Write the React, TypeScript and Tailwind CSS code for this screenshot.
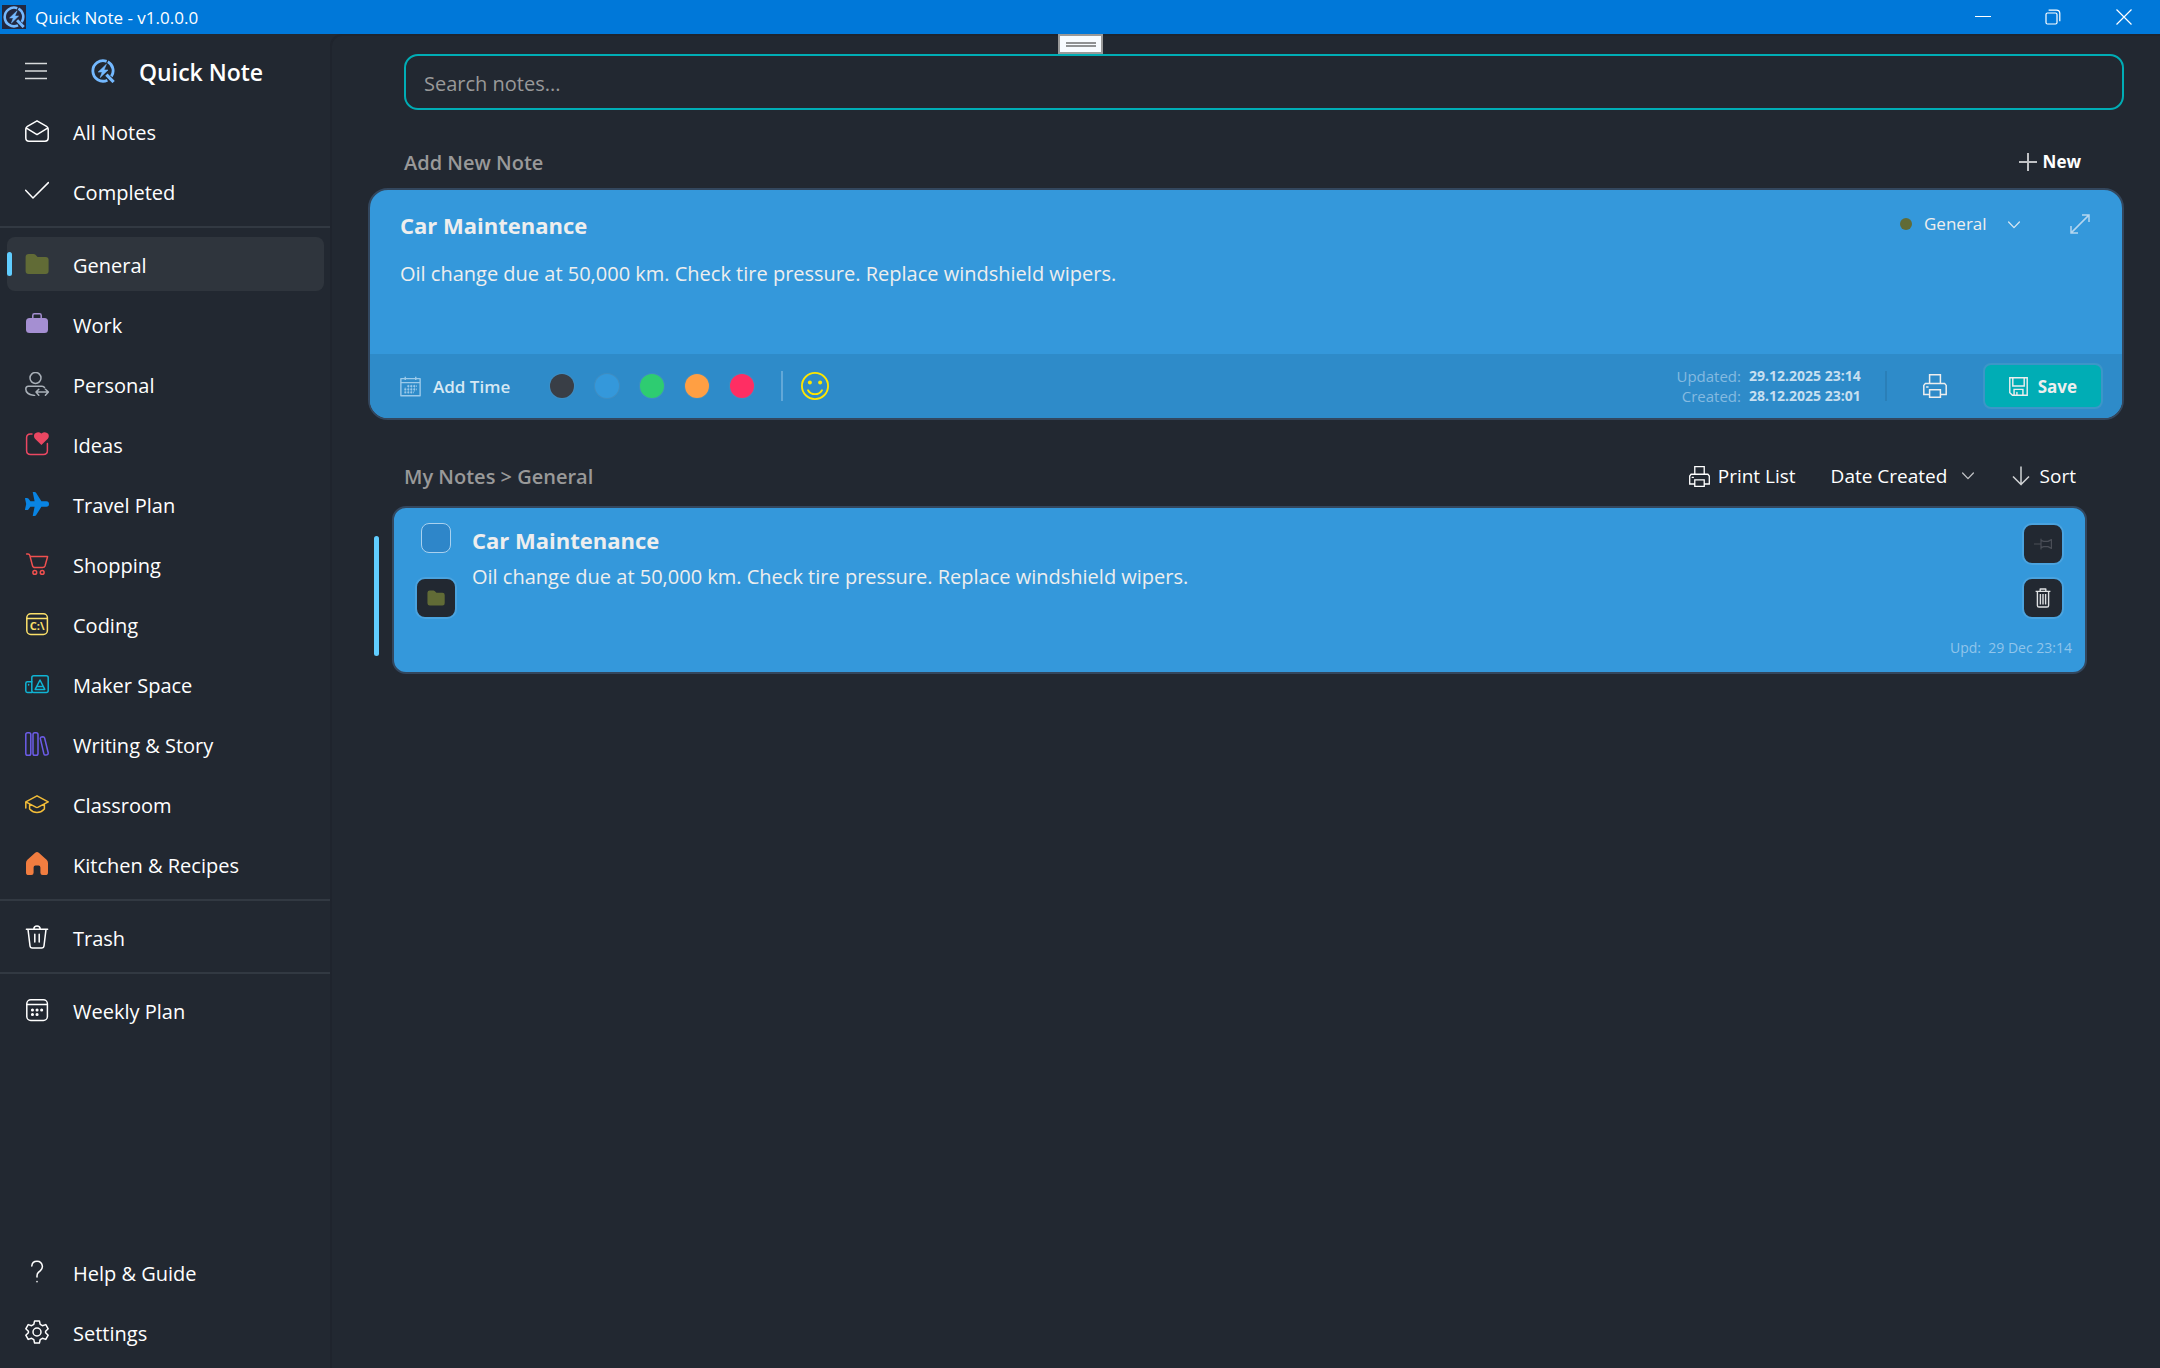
import React from 'react';

type IconProps = { className?: string };

const Svg: React.FC<React.SVGProps<SVGSVGElement>> = ({ children, ...props }) => (
  <svg
    viewBox="0 0 24 24"
    fill="none"
    stroke="currentColor"
    strokeWidth={1.5}
    strokeLinecap="round"
    strokeLinejoin="round"
    aria-hidden="true"
    {...props}
  >
    {children}
  </svg>
);

const LogoIcon = ({ className }: IconProps) => (
  <Svg className={className} stroke="#74b9ff" strokeWidth={2.8} strokeLinecap="butt">
    <path d="M15.6 2.4A10.2 10.2 0 1 0 16.4 21.2M16.8 2.8A10.2 10.2 0 0 1 20.4 17.4" />
    <path d="M15.4 15.6L22.6 23" strokeWidth={3.2} />
    <path d="M15.4 5.2L7.2 13H11.2L9.2 18.6L17 11H13Z" fill="#74b9ff" strokeWidth={0.6} />
  </Svg>
);

const MenuIcon = ({ className }: IconProps) => (
  <Svg className={className} strokeLinecap="butt">
    <path d="M0 4.5H22M0 12H22M0 19.5H22" />
  </Svg>
);

const MailIcon = ({ className }: IconProps) => (
  <Svg className={className}>
    <path d="M12 1.8L21.6 7.3Q23.2 8.2 23.2 10V19Q23.2 22.2 20 22.2H4Q.8 22.2 .8 19V10Q.8 8.2 2.4 7.3ZM1.4 9.2L12 15.6L22.6 9.2" />
  </Svg>
);

const CheckIcon = ({ className }: IconProps) => (
  <Svg className={className}>
    <path d="M.6 11.2L8 19L23.4 3.6" />
  </Svg>
);

const FolderIcon = ({ className }: IconProps) => (
  <Svg className={className} fill="currentColor" stroke="none">
    <path d="M3.6 2H8.6Q9.6 2 10.2 2.6L12.6 5H20.6Q23.6 5 23.6 8V19Q23.6 22 20.6 22H3.6Q.6 22 .6 19V5Q.6 2 3.6 2Z" />
  </Svg>
);

const WorkIcon = ({ className }: IconProps) => (
  <Svg className={className}>
    <rect x="1" y="6" width="22" height="15" rx="3.5" fill="currentColor" stroke="none" />
    <path d="M7.8 7V3.4Q7.8 1.8 9.4 1.8H14.6Q16.2 1.8 16.2 3.4V7" />
  </Svg>
);

const PersonIcon = ({ className }: IconProps) => (
  <Svg className={className}>
    <circle cx="10.5" cy="6" r="5.5" />
    <path d="M19.5 15.6Q18.9 14.2 17 14.2H3.4Q.8 14.2 .8 17Q.8 22.6 9.6 23.4" />
    <path d="M11.4 20H23.2M13.8 17.2L11 20L13.8 23.2M20.4 17.2L23.4 20L20.4 23.2" />
  </Svg>
);

const HeartIcon = ({ className }: IconProps) => (
  <Svg className={className}>
    <path d="M7 2H5.5Q1.6 2 1.6 5.8V18.4Q1.6 22.4 5.6 22.4H18.4Q22.4 22.4 22.4 18.4V11.5" />
    <path d="M16.4 13L10 6.8Q8.2 4.4 9.6 1.8Q12.8-1.4 16.4 1.6Q20-1.4 23.2 1.8Q24.6 4.4 22.8 6.8Z" fill="currentColor" stroke="none" />
  </Svg>
);

const PlaneIcon = ({ className }: IconProps) => (
  <Svg className={className} fill="currentColor" stroke="none">
    <path d="M8 0H9.6Q10.6 0 11.2 1L16.4 9.2H21.4Q24 9.4 24 12Q24 14.6 21.4 14.8H16.4L11.2 23Q10.6 24 9.6 24H8Q7.6 24 7.8 23.4L9.6 14.8H5.4L3.4 17.4Q2.8 18 2 18H.4Q0 18 0 17.4L1.2 12L0 6.6Q0 6 .4 6H2Q2.8 6 3.4 6.6L5.4 9.2H9.6L7.8 .6Q7.6 0 8 0Z" />
  </Svg>
);

const CartIcon = ({ className }: IconProps) => (
  <Svg className={className}>
    <path d="M1.6 2H3Q4.4 2 4.8 3.4L7.4 13.4Q7.8 15.6 10 15.6H17.6Q19.4 15.6 20 14L22.6 4.6H5.2" />
    <circle cx="9.8" cy="20.4" r="1.9" />
    <circle cx="17.2" cy="20.4" r="1.9" />
  </Svg>
);

const ConsoleIcon = ({ className }: IconProps) => (
  <Svg className={className}>
    <rect x="1.8" y="1.8" width="20.6" height="20.6" rx="4" />
    <path d="M2 6.4H22" />
    <text x="12.2" y="17.6" fontSize="11" textAnchor="middle" fontWeight="700" fill="currentColor" stroke="none" fontFamily="Open Sans, sans-serif">
      C:\
    </text>
  </Svg>
);

const MakerIcon = ({ className }: IconProps) => (
  <Svg className={className}>
    <rect x="6.8" y="3.8" width="16.4" height="16.6" rx="2" />
    <path d="M6.8 9.8H2.4Q.8 9.8 .8 11.4V18.8Q.8 20.4 2.4 20.4H7M3.6 12.6V13" />
    <path d="M15 8L19.8 17.4H10.2ZM12.4 14.6H17.6" />
  </Svg>
);

const BooksIcon = ({ className }: IconProps) => (
  <Svg className={className}>
    <rect x=".8" y=".8" width="5" height="22.4" rx="1.8" />
    <rect x="8" y=".8" width="5" height="22.4" rx="1.8" />
    <path d="M15.4 6.8Q15.2 5.4 16.4 5L18 4.8Q19.2 4.8 19.6 6L23.2 20.8Q23.4 22.4 22 22.8L20.6 23.1Q19.2 23.2 18.9 21.8Z" />
  </Svg>
);

const ClassIcon = ({ className }: IconProps) => (
  <Svg className={className}>
    <path d="M12 3.8L23.2 9.8L13.2 15.2Q12 15.8 10.8 15.2L.8 9.8ZM.8 10V16M4.6 12.4V17Q8 20.6 12 20.6T19.4 17V12.4" />
  </Svg>
);

const HomeIcon = ({ className }: IconProps) => (
  <Svg className={className} fill="currentColor" stroke="none">
    <path d="M10.2 .8Q12-.8 13.8 .8L21.6 7.8Q23 9 23 11V20.4Q23 23 20.4 23H17.6Q15.4 23 15.4 20.8V15.4Q15.4 13.6 13.6 13.6H10.4Q8.6 13.6 8.6 15.4V20.8Q8.6 23 6.4 23H3.6Q1 23 1 20.4V11Q1 9 2.4 7.8Z" />
  </Svg>
);

const TrashIcon = ({ className }: IconProps) => (
  <Svg className={className}>
    <path d="M1.4 4.2H22.6M8.8 4Q9 1 12 1T15.2 4M3 4.4L5 20.8Q5.2 23 7.4 23H16.6Q18.8 23 19 20.8L21 4.4M9.8 9.2V17M14.2 9.2V17" />
  </Svg>
);

const CalendarIcon = ({ className }: IconProps) => (
  <Svg className={className}>
    <rect x="1.8" y="1.8" width="20.6" height="20.6" rx="4" />
    <path d="M2 6.4H22" />
    <path d="M7.4 12H7.5M12 12H12.1M16.6 12H16.7M7.4 16.6H7.5M12 16.6H12.1" strokeWidth={3} />
  </Svg>
);

const HelpIcon = ({ className }: IconProps) => (
  <Svg className={className}>
    <path d="M6.8 6Q7.2 1.2 12 1.2T17.4 6.4Q17.4 8.6 15.4 10.6L13.4 12.4Q12 13.8 12 16V17M12 21.6V21.7" />
  </Svg>
);

const GearIcon = ({ className }: IconProps) => (
  <Svg className={className}>
    <circle cx="12" cy="12" r="4" />
    <path d="M9.6 .9H14.4L15.2 4.4L17.4 5.7L20.8 4.6L23.2 8.8L20.6 11.2V12.8L23.2 15.2L20.8 19.4L17.4 18.3L15.2 19.6L14.4 23.1H9.6L8.8 19.6L6.6 18.3L3.2 19.4L.8 15.2L3.4 12.8V11.2L.8 8.8L3.2 4.6L6.6 5.7L8.8 4.4Z" />
  </Svg>
);

const MonthIcon = ({ className }: IconProps) => (
  <Svg className={className} strokeWidth={1.6} strokeLinecap="butt">
    <path d="M1 3H23V22.6H1ZM1 7.6H23M6 .8V4.6M18 .8V4.6" />
    <path d="M8.4 11.6H19.4M5 15.2H19.4M5 18.8H16" strokeWidth={2} strokeDasharray="2.2 1.2" />
    <path d="M6 13V20M9.6 10V20M13 10V20M16.6 10V18" strokeWidth={0.6} />
  </Svg>
);

const SmileIcon = ({ className }: IconProps) => (
  <Svg className={className} strokeWidth={1.6}>
    <circle cx="12" cy="12" r="11.2" />
    <path d="M6 15.6Q8 19 12 19T18 15.6" />
    <circle cx="7.6" cy="9" r="1.7" fill="currentColor" stroke="none" />
    <circle cx="16.4" cy="9" r="1.7" fill="currentColor" stroke="none" />
  </Svg>
);

const PrinterIcon = ({ className }: IconProps) => (
  <Svg className={className} strokeLinejoin="miter">
    <path d="M6.6 9.4V.8H17.4V9.4M6.6 20.6H.8V11.4L2.4 9.4H21.6L23.2 11.4V20.6H17.4M6.6 15.8H17.4V23.2H6.6ZM3.6 12.9H5" />
  </Svg>
);

const SaveIcon = ({ className }: IconProps) => (
  <Svg className={className} strokeWidth={1.8} strokeLinejoin="miter">
    <path d="M1 1H23V23H4.4L1 19.8ZM4.8 1V11.4H19.2V1M6.4 23V15.6H17.6V23M10 19.4V23" />
  </Svg>
);

const ChevronIcon = ({ className }: IconProps) => (
  <Svg className={className} viewBox="0 0 12 12">
    <path d="M.6 3L6 8.6L11.4 3" strokeWidth={1.3} />
  </Svg>
);

const PlusIcon = ({ className }: IconProps) => (
  <Svg className={className} strokeLinecap="butt" viewBox="0 0 18 18">
    <path d="M9 0V18M0 9H18" strokeWidth={2} stroke="#c0c2c5" />
  </Svg>
);

const ExpandIcon = ({ className }: IconProps) => (
  <Svg className={className} strokeLinecap="butt" strokeLinejoin="miter" viewBox="0 0 20 20">
    <path d="M1.4 18.6L18.6 1.4M12 1H19V8M1 12V19H8" />
  </Svg>
);

const ArrowDownIcon = ({ className }: IconProps) => (
  <Svg className={className} viewBox="0 0 18 20" strokeLinecap="butt">
    <path d="M9 .5V18.5M1 10.4L9 18.6L17 10.4" stroke="#d0d2d4" />
  </Svg>
);

const PinIcon = ({ className }: IconProps) => (
  <Svg className={className} viewBox="0 0 18 14" strokeWidth={1.2}>
    <path d="M0 7H7M7 2V12M7 3.4L9.6 4.4H14L17.4 2.6V11.4L14 9.6H9.6L7 10.6" />
  </Svg>
);

const BinIcon = ({ className }: IconProps) => (
  <Svg className={className} viewBox="0 0 16 20" strokeWidth={1.4} strokeLinecap="butt">
    <path d="M.6 3.4H15.4M5.2 3V1H10.8V3M2.4 3.6V17.4Q2.4 19 4 19H12Q13.6 19 13.6 17.4V3.6M5.4 6V16.4M8 6V16.4M10.6 6V16.4" />
  </Svg>
);

type NavItem = {
  label: string;
  icon: React.FC<IconProps>;
  color: string;
  active?: boolean;
};

const topItems: NavItem[] = [
  { label: 'All Notes', icon: MailIcon, color: 'text-white' },
  { label: 'Completed', icon: CheckIcon, color: 'text-white' },
];

const categories: NavItem[] = [
  { label: 'General', icon: FolderIcon, color: 'text-[#616b36]', active: true },
  { label: 'Work', icon: WorkIcon, color: 'text-[#a58fd2]' },
  { label: 'Personal', icon: PersonIcon, color: 'text-[#a9b0b8]' },
  { label: 'Ideas', icon: HeartIcon, color: 'text-[#eb4762]' },
  { label: 'Travel Plan', icon: PlaneIcon, color: 'text-[#0984e3]' },
  { label: 'Shopping', icon: CartIcon, color: 'text-[#f0504f]' },
  { label: 'Coding', icon: ConsoleIcon, color: 'text-[#fbe06a]' },
  { label: 'Maker Space', icon: MakerIcon, color: 'text-[#10b4d4]' },
  { label: 'Writing & Story', icon: BooksIcon, color: 'text-[#6c5ce7]' },
  { label: 'Classroom', icon: ClassIcon, color: 'text-[#f3bd38]' },
  { label: 'Kitchen & Recipes', icon: HomeIcon, color: 'text-[#f17d40]' },
];

const bottomItems: NavItem[] = [
  { label: 'Help & Guide', icon: HelpIcon, color: 'text-white' },
  { label: 'Settings', icon: GearIcon, color: 'text-white' },
];

const swatches = [
  { name: 'Dark', color: 'bg-[#393e46]' },
  { name: 'Blue', color: 'bg-[#3498db]' },
  { name: 'Green', color: 'bg-[#2ecc71]' },
  { name: 'Orange', color: 'bg-[#ff9f43]' },
  { name: 'Red', color: 'bg-[#ff2e63]' },
];

const NavGroup: React.FC<{ items: NavItem[] }> = ({ items }) => (
  <ul>
    {items.map(({ label, icon: Icon, color, active }) => (
      <li key={label} className="py-[3px] pl-[7px] pr-1.5">
        <a
          href="#"
          aria-current={active ? 'page' : undefined}
          className={`flex h-[54px] items-center rounded-lg ${active ? 'bg-[#2f353d]' : ''}`}
        >
          <span className={`h-6 w-[5px] rounded-full ${active ? 'bg-[#60cdff]' : ''}`} />
          <Icon className={`ml-[13px] size-6 ${color}`} />
          <span className="ml-6 pt-1">{label}</span>
        </a>
      </li>
    ))}
  </ul>
);

const Divider = () => <hr className="mb-1.5 mt-[5px] border-t-2 border-[#323942]" />;

const Sidebar = () => (
  <nav className="flex w-[330px] shrink-0 flex-col pb-1.5 text-xl text-white">
    <div className="flex h-[67px] items-center pl-[25px] pt-1.5">
      <button type="button" aria-label="Toggle menu">
        <MenuIcon className="size-6 text-[#d8dadc]" />
      </button>
      <LogoIcon className="ml-[42px] size-6" />
      <span className="ml-6 pt-1 text-[23px] font-semibold">Quick Note</span>
    </div>
    <NavGroup items={topItems} />
    <Divider />
    <NavGroup items={categories} />
    <Divider />
    <NavGroup items={[{ label: 'Trash', icon: TrashIcon, color: 'text-white' }]} />
    <Divider />
    <NavGroup items={[{ label: 'Weekly Plan', icon: CalendarIcon, color: 'text-white' }]} />
    <div className="mt-auto">
      <NavGroup items={bottomItems} />
    </div>
  </nav>
);

const TitleBar = () => (
  <header className="flex h-[34px] shrink-0 items-center bg-[#0078d9] text-white">
    <span className="ml-0.5 bg-[#222840] p-px">
      <LogoIcon className="size-[22px]" />
    </span>
    <h1 className="ml-[9px] pt-px text-[17px]">Quick Note - v1.0.0.0</h1>
    <div className="ml-auto flex">
      <button type="button" aria-label="Minimize" className="flex h-[34px] w-[70px] items-center justify-center">
        <svg viewBox="0 0 16 16" className="size-4" stroke="currentColor">
          <path d="M0 7.5H16" />
        </svg>
      </button>
      <button type="button" aria-label="Restore" className="flex h-[34px] w-[70px] items-center justify-center">
        <svg viewBox="0 0 16 16" className="size-4" fill="none" stroke="currentColor" strokeWidth="1.2">
          <rect x="1" y="4" width="11" height="11" rx="1.5" />
          <path d="M3.6 1.2H11.4Q14.8 1.2 14.8 4.6V12.2" />
        </svg>
      </button>
      <button type="button" aria-label="Close" className="flex h-[34px] w-[72px] items-center justify-center">
        <svg viewBox="0 0 16 16" className="size-4" stroke="currentColor" strokeWidth="1.2">
          <path d="M.5 .5L15.5 15.5M15.5 .5L.5 15.5" />
        </svg>
      </button>
    </div>
  </header>
);

const NoteEditor = () => (
  <section className="overflow-hidden rounded-[20px] border-2 border-[#33475e] bg-[#3498db]">
    <div className="flex h-16 items-center pl-[30px] pr-8 pt-1">
      <input
        aria-label="Note title"
        defaultValue="Car Maintenance"
        className="min-w-0 flex-1 bg-transparent pt-0.5 text-[22px] font-bold text-[#eee] outline-none"
      />
      <span className="size-3 rounded-full bg-[#616b36]" />
      <div className="relative ml-3">
        <select aria-label="Category" className="w-24 appearance-none bg-transparent text-[17px] font-medium text-[#eee] outline-none">
          <option>General</option>
        </select>
        <ChevronIcon className="pointer-events-none absolute right-0 top-2 size-3 text-[#d6e6f2]" />
      </div>
      <button type="button" aria-label="Expand" className="ml-[50px]">
        <ExpandIcon className="size-5 text-[#b4d6ef]" />
      </button>
    </div>
    <textarea
      aria-label="Note text"
      rows={3}
      defaultValue="Oil change due at 50,000 km. Check tire pressure. Replace windshield wipers."
      className="block h-[100px] w-full resize-none bg-transparent px-[30px] pt-1.5 text-xl text-[#eee] outline-none"
    />
    <footer className="flex h-16 items-center bg-[#2e8bc9] pl-[30px] pr-[19px]">
      <button type="button" className="flex items-center gap-3 text-[17px] font-semibold text-[#d5e8f4]">
        <MonthIcon className="size-[21px] text-[#9bcaea]" />
        <span className="pt-0.5">Add Time</span>
      </button>
      <div className="ml-10 flex gap-[21px]">
        {swatches.map((s) => (
          <button
            key={s.name}
            type="button"
            aria-label={s.name}
            className={`size-6 rounded-full ring-1 ring-[#4a8fbe]/60 ${s.color}`}
          />
        ))}
      </div>
      <span className="ml-[27px] h-[30px] w-0.5 bg-[#62a8d8]" />
      <button type="button" aria-label="Emoji" className="ml-[18px]">
        <SmileIcon className="size-7 text-[#ffe600]" />
      </button>
      <dl className="ml-auto grid grid-cols-[auto_auto] gap-x-2 text-right text-[15px] leading-5 text-[#85bae0]">
        <dt>Updated:</dt>
        <dd className="text-sm leading-5 font-bold text-[#c6dff0]">29.12.2025 23:14</dd>
        <dt>Created:</dt>
        <dd className="text-sm leading-5 font-bold text-[#c6dff0]">28.12.2025 23:01</dd>
      </dl>
      <span className="ml-6 h-[30px] w-0.5 bg-[#2a7fb8]" />
      <button type="button" aria-label="Print note" className="ml-9">
        <PrinterIcon className="size-6 text-[#eee]" />
      </button>
      <button
        type="button"
        className="ml-9 flex h-[46px] items-center gap-2.5 rounded-lg border-2 border-[#3c96c8] bg-[#00adb5] px-6 text-[17px] font-bold text-[#eee]"
      >
        <SaveIcon className="size-[19px]" />
        <span className="pt-0.5">Save</span>
      </button>
    </footer>
  </section>
);

const cardButton =
  'flex size-[42px] items-center justify-center rounded-[10px] border-2 border-[#4aa3df] bg-[#222831]';

const NoteCard = () => (
  <article className="flex items-center">
    <span className="mt-3 h-[120px] w-[5px] rounded-full bg-[#60cdff]" />
    <div className="ml-[13px] flex h-[168px] min-w-0 flex-1 rounded-[14px] border-2 border-[#33475e] bg-[#3498db]">
      <div className="flex w-[78px] flex-col items-center gap-6 pl-[21px] pr-[15px] pt-[15px]">
        <input
          type="checkbox"
          aria-label="Completed"
          className="size-[30px] appearance-none rounded-lg border border-[#a9d1ef] bg-[#2e86c9]"
        />
        <button type="button" aria-label="Move to category" className={cardButton}>
          <FolderIcon className="size-[18px] text-[#616b36]" />
        </button>
      </div>
      <div className="min-w-0 flex-1 pt-3.5 text-[#eee]">
        <h3 className="text-[22px] font-bold leading-9">Car Maintenance</h3>
        <p className="text-xl leading-[38px]">
          Oil change due at 50,000 km. Check tire pressure. Replace windshield wipers.
        </p>
      </div>
      <div className="flex flex-col items-end pr-[13px] pt-[15px]">
        <div className="flex flex-col gap-3 pr-2">
          <button type="button" aria-label="Pin" className={cardButton}>
            <PinIcon className="h-3.5 w-[18px] text-[#4a4e57]" />
          </button>
          <button type="button" aria-label="Delete" className={cardButton}>
            <BinIcon className="h-5 w-4 text-[#dfe1e3]" />
          </button>
        </div>
        <p className="mb-3.5 mt-auto text-sm leading-5 text-[#90c5eb]">Upd:&nbsp; 29 Dec 23:14</p>
      </div>
    </div>
  </article>
);

const App: React.FC = () => {
  return (
    <div className="flex min-h-screen flex-col bg-[#222831] font-['Open_Sans',sans-serif]">
      <TitleBar />
      <div className="flex flex-1">
        <Sidebar />
        <main className="relative min-w-0 flex-1 rounded-tl-xl border-l-2 border-t-2 border-[#1f242d] pl-9 pr-9 pt-[18px]">
          <div className="absolute left-[726px] top-[-2px] flex h-5 w-[45px] flex-col items-center justify-center gap-px border-2 border-[#999] bg-[#f7fbff]">
            <span className="h-0.5 w-[30px] bg-[#8f9193]" />
            <span className="h-0.5 w-[30px] bg-[#8f9193]" />
          </div>
          <div className="pl-9">
            <input
              type="search"
              aria-label="Search notes"
              placeholder="Search notes..."
              className="block h-14 w-full rounded-[14px] border-2 border-[#00adb5] bg-transparent px-[18px] pt-0.5 text-xl text-white outline-none placeholder:text-[#999]"
            />
          </div>
          <div className="flex h-[78px] items-center justify-between pl-9 pr-[43px] pt-[26px]">
            <h2 className="pt-0.5 text-xl font-semibold text-[#999]">Add New Note</h2>
            <button type="button" className="flex items-center gap-1.5 text-[17px] font-bold text-white">
              <PlusIcon className="size-[18px]" />
              New
            </button>
          </div>
          <NoteEditor />
          <div className="flex h-[86px] items-center pl-9 pr-12 pt-[26px] text-[19px] text-white">
            <h2 className="pt-0.5 text-xl font-semibold text-[#999]">My Notes &gt; General</h2>
            <button type="button" className="ml-auto flex items-center gap-2">
              <PrinterIcon className="size-[21px]" />
              Print List
            </button>
            <div className="relative ml-[35px]">
              <select aria-label="Sort by" className="w-[143px] appearance-none bg-transparent outline-none">
                <option>Date Created</option>
              </select>
              <ChevronIcon className="pointer-events-none absolute right-0 top-2 size-3 text-[#c0c2c5]" />
            </div>
            <button type="button" className="ml-[38px] flex items-center gap-2.5">
              <ArrowDownIcon className="h-5 w-[18px]" />
              Sort
            </button>
          </div>
          <div className="pl-1.5 pr-[37px]">
            <NoteCard />
          </div>
        </main>
      </div>
    </div>
  );
};

export default App;
